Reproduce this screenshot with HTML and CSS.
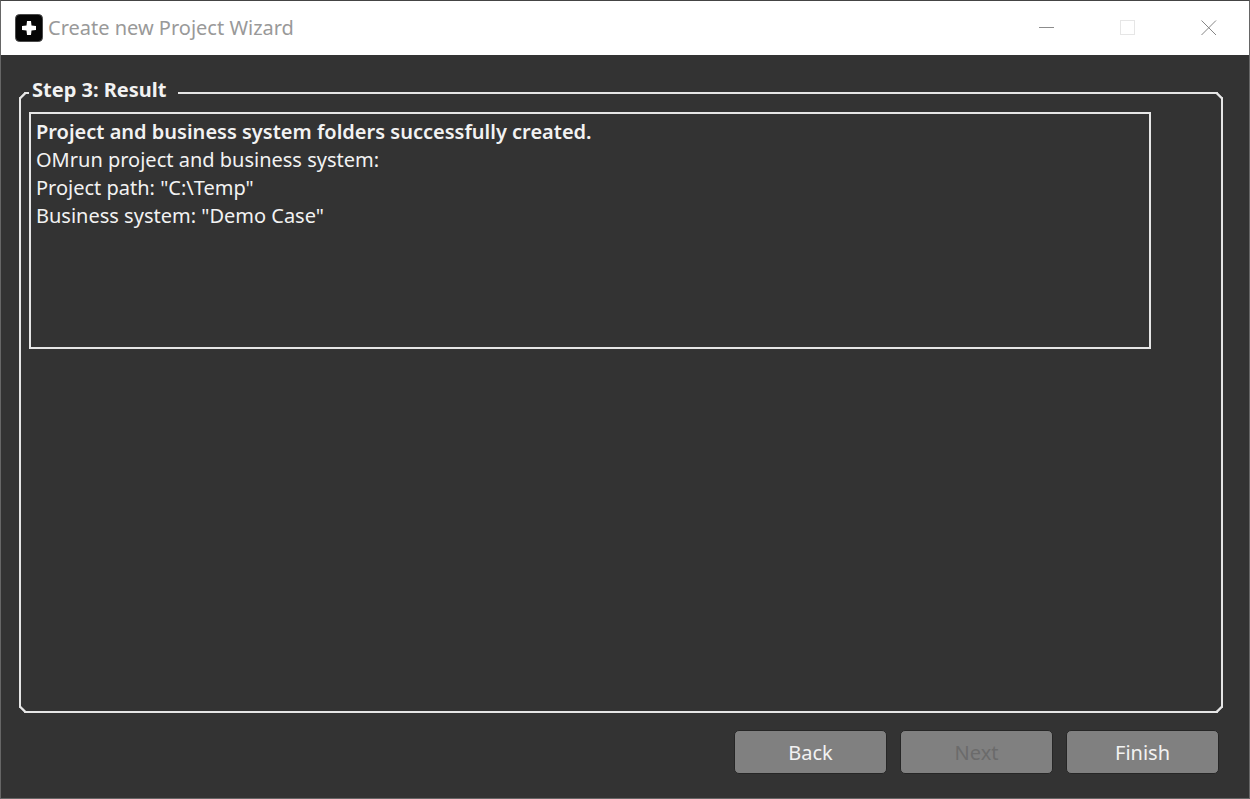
FILE: index.html
```html
<!DOCTYPE html>
<html lang="en">
<head>
    <meta charset="UTF-8">
    <meta name="viewport" content="width=device-width, initial-scale=1.0">
    <title>Create new Project Wizard</title>
    <link rel="stylesheet" href="styles.css">
</head>
<body>
    <header class="titlebar">
        <svg class="app-icon" viewBox="0 0 28 28" aria-hidden="true">
            <rect x="0.5" y="0.5" width="27" height="27" rx="4" fill="#050505" stroke="#4a4a4a"/>
            <path d="M12 7h4l0.5 4.5L21 12v4l-4.5 0.5L16 21h-4l-0.5-4.5L7 16v-4l4.5-0.5z" fill="#fff"/>
        </svg>
        <h1 class="title">Create new Project Wizard</h1>
        <div class="window-controls">
            <button type="button" class="window-button" aria-label="Minimize">
                <svg viewBox="0 0 16 16"><path d="M0 7.5h15" stroke="#8c8c8c"/></svg>
            </button>
            <button type="button" class="window-button" aria-label="Maximize" disabled>
                <svg viewBox="0 0 16 16"><rect x="0.5" y="0.5" width="14" height="14" fill="none" stroke="#e6e6e6"/></svg>
            </button>
            <button type="button" class="window-button" aria-label="Close">
                <svg viewBox="0 0 16 16"><path d="M0.5 0.5l14.5 14.5M15 0.5L0.5 15" stroke="#858585"/></svg>
            </button>
        </div>
    </header>

    <form class="wizard">
        <fieldset class="step">
            <legend>Step 3: Result</legend>
            <div class="result">
                <p class="result-title">Project and business system folders successfully created.</p>
                <p>OMrun project and business system:</p>
                <p>Project path: "C:\Temp"</p>
                <p>Business system: "Demo Case"</p>
            </div>
        </fieldset>
        <div class="actions">
            <button type="button" class="action">Back</button>
            <button type="button" class="action" disabled>Next</button>
            <button type="submit" class="action">Finish</button>
        </div>
    </form>
</body>
</html>
```
FILE: styles.css
```css
* {
    box-sizing: border-box;
}
body {
    margin: 0;
    min-height: 100vh;
    display: flex;
    flex-direction: column;
    border: 1px solid #666;
    border-top-color: #444;
    background-color: #333;
    color: #f2f2f2;
    font-family: "Noto Sans", "Open Sans", sans-serif;
    font-size: 20px;
    line-height: 28px;
}
.titlebar {
    display: flex;
    align-items: center;
    height: 54px;
    padding-left: 14px;
    background-color: #fff;
}
.app-icon {
    width: 28px;
    height: 28px;
    margin-right: 5px;
}
.title {
    margin: 0;
    color: #999;
    font-size: 20px;
    font-weight: 400;
}
.window-controls {
    display: flex;
    align-self: stretch;
    margin-left: auto;
}
.window-button {
    display: flex;
    align-items: center;
    justify-content: center;
    width: 81px;
    padding: 0;
    border: none;
    background: none;
}
.window-button svg {
    width: 16px;
    height: 16px;
}
.wizard {
    flex: 1;
    display: flex;
    flex-direction: column;
    padding: 21px 26px 24px 18px;
}
.step {
    flex: 1;
    margin: 0;
    padding: 2px 70px 0 8px;
    border: 2px solid #e6e6e6;
    border-radius: 6px;
    corner-shape: bevel;
}
.step legend {
    padding: 0 12px 6px 3px;
    font-weight: 700;
}
.result {
    min-height: 237px;
    padding: 4px 5px;
    border: 2px solid #e6e6e6;
}
.result p {
    margin: 0;
}
.result .result-title {
    font-weight: 600;
}
.actions {
    display: flex;
    justify-content: flex-end;
    gap: 13px;
    padding-top: 17px;
    padding-right: 4px;
}
.action {
    width: 153px;
    height: 44px;
    padding: 0;
    border: 1px solid #262626;
    border-radius: 5px;
    background-color: #808080;
    color: #f2f2f2;
    font-family: inherit;
    font-size: 20px;
}
.action:disabled {
    color: #6b6b6b;
}
```
